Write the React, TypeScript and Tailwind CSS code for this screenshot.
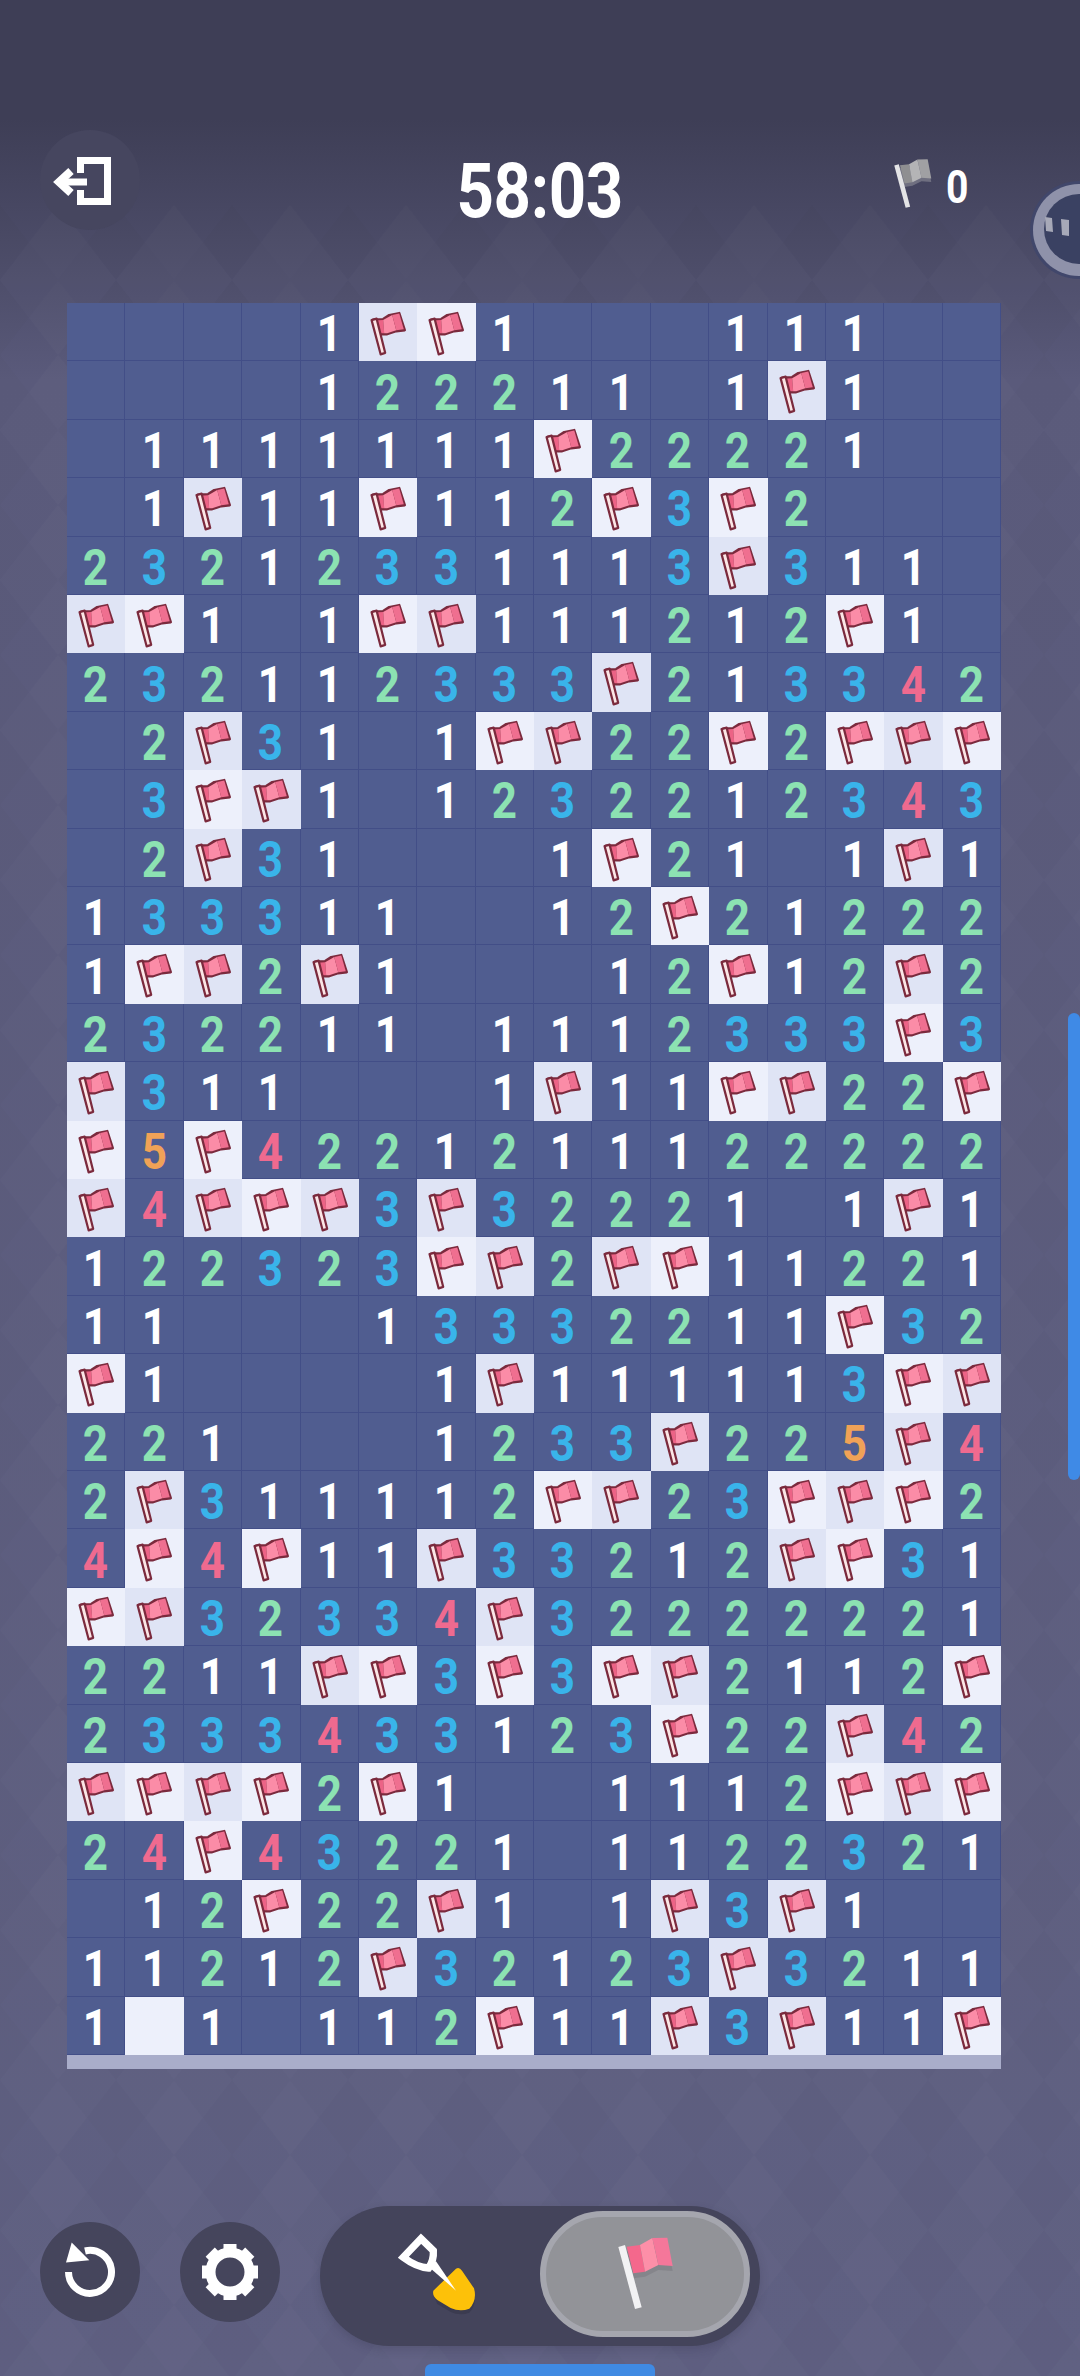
const board = [
  "....1FF1...111..",
  "....122211.1F1..",
  ".1111111F22221..",
  ".1F11F112F3F2...",
  "23212331113F311.",
  "FF1.1FF111212F1.",
  "232112333F213342",
  ".2F31.1FF22F2FFF",
  ".3FF1.1232212343",
  ".2F31...1F21.1F1",
  "133311..12F21222",
  "1FF2F1...12F12F2",
  "232211.1112333F3",
  "F311...1F11FF22F",
  "F5F4221211122222",
  "F4FFF3F32221.1F1",
  "122323FF2FF11221",
  "11...13332211F32",
  "F1....1F111113FF",
  "221...1233F225F4",
  "2F311112FF23FFF2",
  "4F4F11F33212FF31",
  "FF32334F32222221",
  "2211FF3F3FF2112F",
  "2333433123F22F42",
  "FFFF2F1..1112FFF",
  "24F43221.1122321",
  ".12F22F1.1F3F1..",
  "11212F32123F3211",
  "1W1.112F11F3F11F",
];

const digitColors: Record<string, string> = {
  "1": "text-white",
  "2": "text-[#8ce2b2]",
  "3": "text-[#39b4ea]",
  "4": "text-[#ef6a8f]",
  "5": "text-[#f0a257]",
};

function CellFlag() {
  return (
    <svg viewBox="0 0 58 58" className="w-full h-full">
      <path d="M14 16.5 L24 16 L30 12 L40 10 L45.5 27 L37 28 L28 31 L17 31 Z" fill="#7b2a3d" stroke="#7b2a3d" strokeWidth="2.4" strokeLinejoin="round" />
      <path d="M16 17.5 L24 17 L25 30 L18 30 Z" fill="#ec6386" />
      <path d="M24 17 L33 12 L37 27 L28 30 L25 30 Z" fill="#fb8ca7" />
      <path d="M33 12 L40 10.5 L44.5 26 L37 27 Z" fill="#ef6f90" />
      <path d="M12.5 17 L17.5 15.5 L26 49.5 L21.5 51 Z" fill="#fbe6e6" stroke="#7b2a3d" strokeWidth="2.2" strokeLinejoin="round" />
    </svg>
  );
}

function BigFlag({ a, b, c, pole, shadow }: { a: string; b: string; c: string; pole: string; shadow: string }) {
  return (
    <>
      <path d="M140 152 L182 150 L217 130 L262 128 L278 213 L235 210 L195 230 L160 235 Z" fill={shadow} />
      <path d="M140 140 L180 135 L195 215 L160 220 Z" fill={a} />
      <path d="M180 135 L217 114 L235 195 L195 215 Z" fill={b} />
      <path d="M217 114 L262 113 L278 198 L235 195 Z" fill={c} />
      <path d="M115 141 L135 135 L185 322 L165 327 Z" fill={pole} />
    </>
  );
}

function Cell({ v, r, c }: { v: string; r: number; c: number }) {
  const light = (r + c) % 2 === 0 ? "bg-[#edf0fb]" : "bg-[#dfe4f5]";
  if (v === "F") {
    return <div className={light}><CellFlag /></div>;
  }
  if (v === "W") {
    return <div className={light} />;
  }
  return (
    <div className="bg-[#505d90] border-r border-b border-[#424e87] flex items-center justify-center pt-[5px]">
      {v !== "." && (
        <span className={`inline-block scale-x-[0.88] text-[50px] leading-none font-bold ${digitColors[v]}`}>{v}</span>
      )}
    </div>
  );
}

function RoundButton({ children, tone }: { children: React.ReactNode; tone: string }) {
  return <div className={`w-[100px] h-[100px] rounded-full shrink-0 ${tone}`}>{children}</div>;
}

export default function App() {
  return (
    <div className="relative w-[1080px] h-[2376px] overflow-hidden font-['Roboto',sans-serif] bg-gradient-to-b from-[#3e3e56] from-[5%] via-[#5a5a7b] via-[16%] to-[#5f6082]">
      {/* 背景の菱形 */}
      <svg className="absolute inset-0 w-full h-full" aria-hidden="true">
        <defs>
          <pattern id="dia" width="116" height="150" patternUnits="userSpaceOnUse" patternTransform="translate(0 205)">
            <path d="M58 0 L116 75 L58 150 L0 75 Z" fill="#ffffff" fillOpacity="0.016" />
            <path d="M0 0 L58 75 L0 150 Z M116 0 L58 75 L116 150 Z" fill="#000000" fillOpacity="0.016" />
          </pattern>
        </defs>
        <rect x="0" y="205" width="1080" height="2171" fill="url(#dia)" />
      </svg>

      <div className="relative flex flex-col h-full">
        {/* ヘッダー */}
        <div className="h-[303px] pt-[130px] px-[40px] grid grid-cols-[1fr_auto_1fr] items-start">
          <RoundButton tone="bg-[#46465f]">
            <svg viewBox="0 0 100 100" className="w-full h-full" fill="none" stroke="#ffffff">
              <path d="M40.5 43 V30.5 H67.5 V71.5 H40.5 V60" strokeWidth="7" />
              <path d="M21 52 H47" strokeWidth="7" />
              <path d="M31 41 L19 52 L31 63" strokeWidth="8" />
            </svg>
          </RoundButton>
          <div className="mt-[23px] text-white text-[76px] leading-none font-bold scale-x-[0.86] tracking-[-0.5px]">58:03</div>
          <div className="flex justify-end items-start mt-[27px] pr-[70px] gap-[10px]">
            <svg viewBox="105 105 185 230" className="w-[42px] h-[53px]">
              <BigFlag a="#8f8f91" b="#b4b4b6" c="#a0a0a3" pole="#e4e4e6" shadow="#6f6f80" />
            </svg>
            <span className="text-white text-[46px] leading-none font-bold scale-x-[0.85] mt-[7px]">0</span>
          </div>
        </div>

        {/* 盤面 */}
        <div className="ml-[67px] w-[934px]">
          <div className="grid grid-cols-16 grid-rows-30 h-[1752px]">
            {board.map((row, r) =>
              row.split("").map((v, c) => <Cell key={`${r}-${c}`} v={v} r={r} c={c} />)
            )}
          </div>
          <div className="h-[14px] bg-[#a9adca]" />
        </div>

        {/* 下部ボタン */}
        <div className="mt-[137px] pl-[40px] flex items-start">
          <div className="mt-[16px] flex gap-[40px]">
            <RoundButton tone="bg-[#45455c]">
              <svg viewBox="0 0 100 100" className="w-full h-full" fill="none">
                <path d="M28.5 50 A21.5 21.5 0 1 0 45 29" stroke="#ffffff" strokeWidth="7" />
                <path d="M31.7 20.6 L26 40.6 L49.3 38.3 Z" fill="#ffffff" />
              </svg>
            </RoundButton>
            <RoundButton tone="bg-[#45455c]">
              <svg viewBox="0 0 100 100" className="w-full h-full" fill="none">
                <circle cx="50" cy="50" r="19.5" stroke="#ffffff" strokeWidth="10" />
                {[0, 45, 90, 135, 180, 225, 270, 315].map((a) => (
                  <rect key={a} x="43.5" y="22" width="13" height="10" fill="#ffffff" transform={`rotate(${a} 50 50)`} />
                ))}
              </svg>
            </RoundButton>
          </div>
          <div className="ml-[40px] w-[440px] h-[140px] rounded-full bg-[#44445b] pl-[60px] flex items-start shadow-[0_4px_10px_rgba(40,40,60,0.2)]">
            <svg viewBox="0 0 360 360" className="w-[120px] h-[120px] mt-[14px] shrink-0">
              <path d="M160 224 L228 158 L246 164 L282 217 Q292 252 268 278 Q240 288 212 276 L172 252 Z" fill="#3b3b50" />
              <path d="M160 212 L228 146 Q238 140 246 152 L282 205 Q292 240 268 266 Q240 276 212 264 L172 240 Q156 228 160 212 Z" fill="#fdc109" />
              <path d="M146 140 L168 124 L228 212 Z" fill="#ffffff" />
              <path d="M123 56 L160 92 Q162 120 146 144 Q110 142 70 112 Z" fill="none" stroke="#ffffff" strokeWidth="22" strokeLinejoin="miter" />
            </svg>
            <div className="ml-[40px] mt-[5px] w-[210px] h-[126px] rounded-full bg-[#929398] border-[6px] border-[#a5a6ae] flex items-center justify-center shrink-0">
              <svg viewBox="15 42 360 360" className="w-[120px] h-[120px] shrink-0">
                <BigFlag a="#f4688c" b="#fd8fa8" c="#f5779a" pole="#f2f2f4" shadow="#85858b" />
              </svg>
            </div>
          </div>
        </div>

        <div className="mt-[18px] mx-auto w-[230px] h-[12px] rounded-t-[6px] bg-[#3f8ae3]" />
      </div>

      {/* 右端のスクロールバー */}
      <div className="absolute right-0 top-[1013px] w-[12px] h-[467px] rounded-full bg-[#3f8ae6]" />

      {/* 右端のフローティングボタン */}
      <svg className="absolute top-[180px] left-[1027px] w-[53px] h-[100px]" viewBox="0 0 53 100">
        <circle cx="52" cy="50" r="49" fill="#41476b" />
        <circle cx="52" cy="50" r="46" fill="#8f92aa" />
        <circle cx="52" cy="49" r="35" fill="#3a4162" />
        <path d="M18 37 L25 38 L26 52 L19 51 Z M34 39 L42 40 L42 56 L35 55 Z" fill="#a7a9b8" />
      </svg>
    </div>
  );
}
